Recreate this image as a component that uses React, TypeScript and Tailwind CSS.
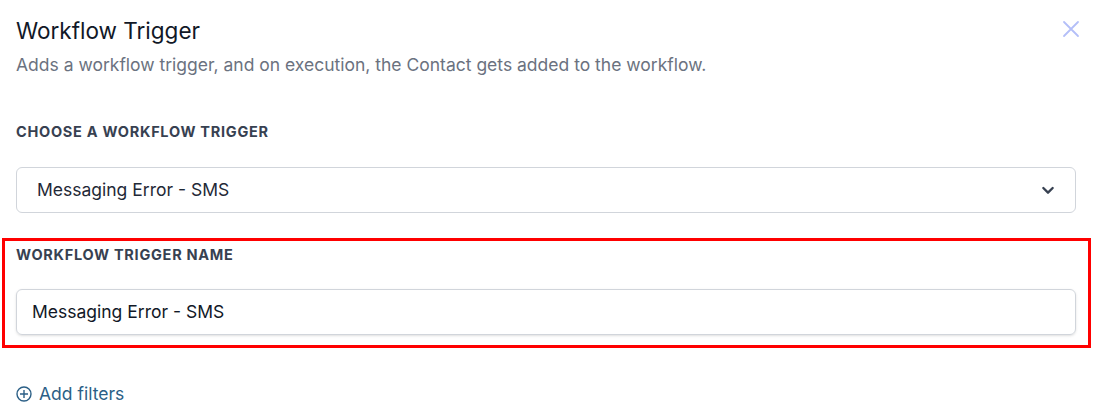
import React from "react";

const font = { fontFamily: "Inter, 'Noto Sans', sans-serif" };

const ChevronDown = () => (
  <svg width="16" height="16" viewBox="0 0 24 24" fill="none" stroke="#374151" strokeWidth="3.5" strokeLinecap="round" strokeLinejoin="round">
    <path d="M5 9l7 7 7-7" />
  </svg>
);

const CloseIcon = () => (
  <svg width="18" height="18" viewBox="0 0 18 18" fill="none" stroke="#b4bff8" strokeWidth="1.8" strokeLinecap="round">
    <path d="M2 2l14 14M16 2L2 16" />
  </svg>
);

const PlusCircle = () => (
  <svg width="16" height="16" viewBox="0 0 16 16" fill="none" stroke="#2b5f86" strokeWidth="1.4">
    <circle cx="8" cy="8" r="7" />
    <path d="M8 4v8M4 8h8" />
  </svg>
);

export default function App() {
  return (
    <div className="relative w-[1106px] h-[416px] bg-white overflow-hidden" style={font}>
      <button className="absolute left-[1062px] top-[20px]">
        <CloseIcon />
      </button>
      <div className="pl-4 pr-[30px] pt-[17px]">
        <h1 className="text-[22.5px] leading-[28px] text-[#111827]">Workflow Trigger</h1>
        <p className="mt-[8px] text-[17.5px] leading-[24px] text-[#6b7280]">
          Adds a workflow trigger, and on execution, the Contact gets added to the workflow.
        </p>

        <div className="mt-[47px] text-[14.5px] leading-[16px] font-bold tracking-[0.05em] text-[#374151] uppercase">
          Choose a workflow trigger
        </div>
        <div className="mt-[27px] h-[46px] flex items-center justify-between rounded-[6px] border border-[#d1d5db] pl-[20px] pr-[19px]">
          <span className="text-[17.5px] text-[#1f2937]">Messaging Error - SMS</span>
          <ChevronDown />
        </div>

        <div className="-ml-[14px] -mr-[15px] mt-[25px] border-[3px] border-[#ff0000] pl-[11px] pr-[12px] pt-[6px] pb-[10px]">
          <div className="text-[14.5px] leading-[16px] font-bold tracking-[0.05em] text-[#374151] uppercase">
            Workflow trigger name
          </div>
          <div className="mt-[26px] h-[46px] flex items-center rounded-[6px] border border-[#d1d5db] pl-[15px] shadow-sm">
            <span className="text-[17.5px] text-[#111827]">Messaging Error - SMS</span>
          </div>
        </div>

        <div className="mt-[33px] flex items-center gap-[7px] text-[#2b5f86]">
          <PlusCircle />
          <span className="text-[17.5px]">Add filters</span>
        </div>
      </div>
    </div>
  );
}
